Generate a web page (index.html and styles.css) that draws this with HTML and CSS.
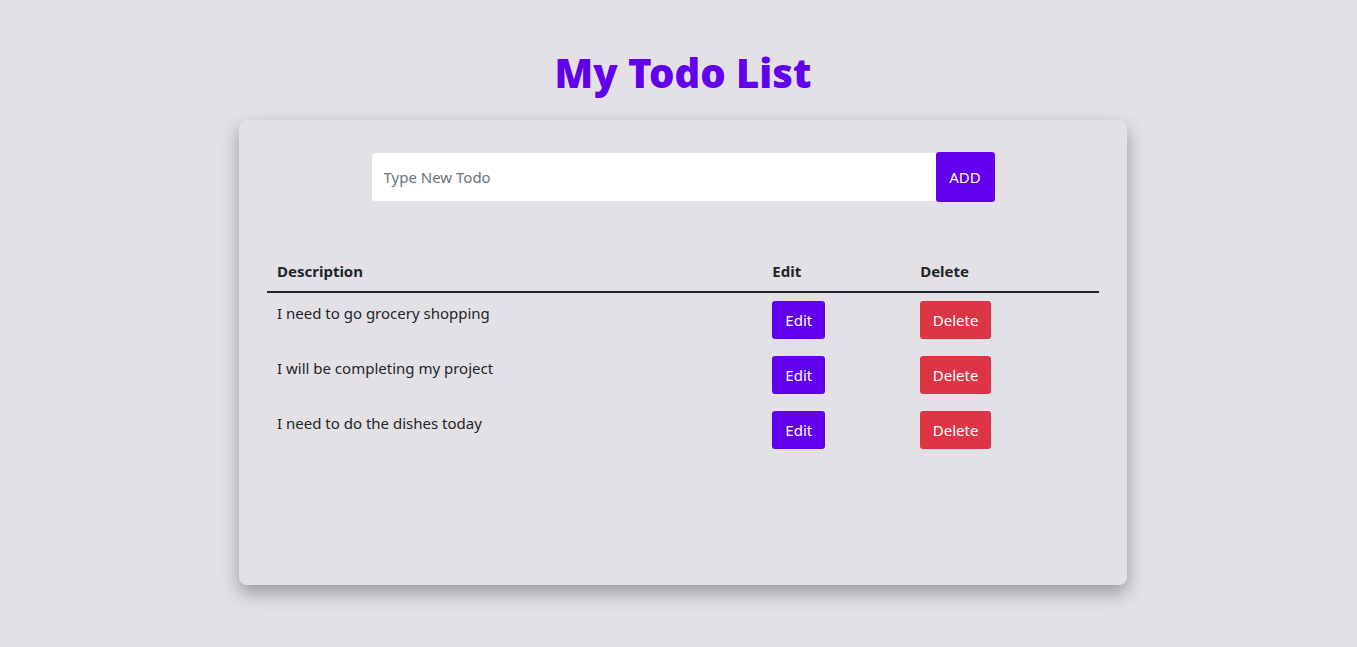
FILE: index.html
```html
<!DOCTYPE html>
<html lang="en">
<head>
<meta charset="utf-8">
<title>My Todo List</title>
<link rel="stylesheet" href="styles.css">
</head>
<body>
<main class="app">
  <h1 class="title">My Todo List</h1>
  <section class="card">
    <form class="add-form">
      <input class="add-input" type="text" placeholder="Type New Todo">
      <button class="add-btn" type="button">ADD</button>
    </form>
    <table class="todo-table">
      <thead>
        <tr>
          <th class="col-desc">Description</th>
          <th class="col-edit">Edit</th>
          <th class="col-del">Delete</th>
        </tr>
      </thead>
      <tbody>
        <tr>
          <td>I need to go grocery shopping</td>
          <td><button class="btn btn-edit" type="button">Edit</button></td>
          <td><button class="btn btn-del" type="button">Delete</button></td>
        </tr>
        <tr>
          <td>I will be completing my project</td>
          <td><button class="btn btn-edit" type="button">Edit</button></td>
          <td><button class="btn btn-del" type="button">Delete</button></td>
        </tr>
        <tr>
          <td>I need to do the dishes today</td>
          <td><button class="btn btn-edit" type="button">Edit</button></td>
          <td><button class="btn btn-del" type="button">Delete</button></td>
        </tr>
      </tbody>
    </table>
  </section>
</main>
</body>
</html>
```
FILE: styles.css
```css
* { box-sizing: border-box; }
html, body { margin: 0; padding: 0; }
body {
  background: #e3e1e6;
  font-family: "Noto Sans", "Open Sans", sans-serif;
  font-size: 15px;
  line-height: 24px;
  color: #212529;
  min-height: 647px;
}
.app {
  width: 888px;
  margin-left: 239px;
  padding-top: 43px;
}
.title {
  margin: 0 0 17px 0;
  text-align: center;
  font-family: "Noto Sans", sans-serif;
  font-weight: 900;
  font-size: 40px;
  line-height: 60px;
  color: #6200ee;
}
.card {
  height: 465px;
  background: #e3e1e6;
  border-radius: 8px;
  box-shadow: 0 8px 18px rgba(0, 0, 0, 0.33);
  padding: 32px 28px;
}
.add-form {
  display: flex;
  justify-content: center;
  align-items: center;
}
.add-input {
  width: 564px;
  height: 48px;
  border: none;
  border-radius: 3px 0 0 3px;
  background: #fff;
  padding: 0 12px;
  font-family: inherit;
  font-size: 15px;
  color: #212529;
  outline: none;
}
.add-input::placeholder { color: #6c757d; }
.add-btn {
  width: 59px;
  height: 50px;
  border: none;
  border-radius: 3px;
  background: #6200ee;
  color: #fff;
  font-family: inherit;
  font-size: 15px;
}
.todo-table {
  width: 832px;
  margin-top: 48px;
  border-collapse: collapse;
}
.todo-table th,
.todo-table td {
  text-align: left;
  vertical-align: top;
  padding: 8px 9px;
  border: 1px solid #dde0e3;
}
.todo-table th {
  font-weight: 700;
  border-bottom: 2px solid #212529;
}
.col-desc { width: 496px; }
.col-edit { width: 148px; }
.col-del { width: 188px; }
.btn {
  height: 38px;
  border: none;
  border-radius: 3px;
  color: #fff;
  font-family: inherit;
  font-size: 15px;
  padding: 0;
  display: block;
}
.btn-edit { background: #6200ee; width: 53px; }
.btn-del { background: #dc3545; width: 71px; }
```
